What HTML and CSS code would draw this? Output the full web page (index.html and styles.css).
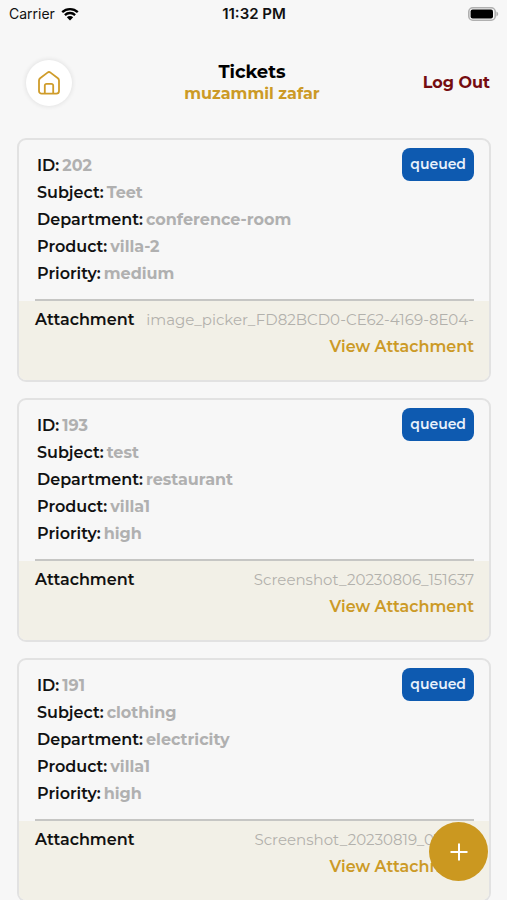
FILE: index.html
```html
<!DOCTYPE html>
<html lang="en">
<head>
<meta charset="utf-8">
<meta name="viewport" content="width=device-width, initial-scale=1">
<title>Tickets</title>
<link rel="stylesheet" href="styles.css">
</head>
<body>
<div class="app">
  <div class="status">
    <div class="status-left">
      <span>Carrier</span>
      <svg class="wifi" viewBox="0 0 18 14" aria-hidden="true">
        <path d="M1.2 5.2a11.2 11.2 0 0 1 15.6 0M3.9 8.1a7.3 7.3 0 0 1 10.2 0" fill="none" stroke="#000" stroke-width="2.3"/>
        <path d="M5.8 10.2a4.6 4.6 0 0 1 6.4 0L9 13.6z"/>
      </svg>
    </div>
    <span class="status-time">11:32 PM</span>
    <div class="status-right">
      <svg class="battery" viewBox="0 0 31 14" aria-hidden="true">
        <rect x="0.8" y="0.8" width="26.4" height="12.4" rx="4" fill="#f7f7f7" stroke="#b0b0b0" stroke-width="1.6"/>
        <rect x="2.6" y="2.4" width="22.4" height="9.2" rx="2"/>
        <path d="M28.4 4.6c2.4.8 2.4 4 0 4.8z" fill="#b0b0b0"/>
      </svg>
    </div>
  </div>

  <header class="header">
    <div class="header-side">
      <button class="home" type="button" aria-label="Home">
        <svg class="home-icon" viewBox="0 0 24 24" aria-hidden="true">
          <path d="M2 9.4c0-.9.4-1.6 1.100-2.200L10.500 1.600a2.500 2.500 0 0 1 3 0l7.400 5.600c.7.600 1.100 1.300 1.100 2.200V20a2.700 2.700 0 0 1-2.700 2.700H4.700A2.700 2.700 0 0 1 2 20z"/>
          <path d="M7.800 22.500v-8a1.700 1.700 0 0 1 1.700-1.700h5a1.700 1.700 0 0 1 1.700 1.700v8"/>
        </svg>
      </button>
    </div>
    <div class="heading">
      <h1 class="title">Tickets</h1>
      <p class="user">muzammil zafar</p>
    </div>
    <div class="header-side header-end">
      <button class="logout" type="button">Log Out</button>
    </div>
  </header>

  <main class="list">
    <article class="card">
      <div class="card-body">
        <dl class="fields">
          <div class="field"><dt>ID:</dt><dd>202</dd></div>
          <div class="field"><dt>Subject:</dt><dd>Teet</dd></div>
          <div class="field"><dt>Department:</dt><dd>conference-room</dd></div>
          <div class="field"><dt>Product:</dt><dd>villa-2</dd></div>
          <div class="field"><dt>Priority:</dt><dd>medium</dd></div>
        </dl>
        <span class="badge">queued</span>
      </div>
      <div class="attachment">
        <div class="attachment-row">
          <span class="attachment-label">Attachment</span>
          <span class="file">image_picker_FD82BCD0-CE62-4169-8E04-</span>
        </div>
        <a class="view" href="#">View Attachment</a>
      </div>
    </article>

    <article class="card">
      <div class="card-body">
        <dl class="fields">
          <div class="field"><dt>ID:</dt><dd>193</dd></div>
          <div class="field"><dt>Subject:</dt><dd>test</dd></div>
          <div class="field"><dt>Department:</dt><dd>restaurant</dd></div>
          <div class="field"><dt>Product:</dt><dd>villa1</dd></div>
          <div class="field"><dt>Priority:</dt><dd>high</dd></div>
        </dl>
        <span class="badge">queued</span>
      </div>
      <div class="attachment">
        <div class="attachment-row">
          <span class="attachment-label">Attachment</span>
          <span class="file">Screenshot_20230806_151637</span>
        </div>
        <a class="view" href="#">View Attachment</a>
      </div>
    </article>

    <article class="card">
      <div class="card-body">
        <dl class="fields">
          <div class="field"><dt>ID:</dt><dd>191</dd></div>
          <div class="field"><dt>Subject:</dt><dd>clothing</dd></div>
          <div class="field"><dt>Department:</dt><dd>electricity</dd></div>
          <div class="field"><dt>Product:</dt><dd>villa1</dd></div>
          <div class="field"><dt>Priority:</dt><dd>high</dd></div>
        </dl>
        <span class="badge">queued</span>
      </div>
      <div class="attachment">
        <div class="attachment-row">
          <span class="attachment-label">Attachment</span>
          <span class="file">Screenshot_20230819_013625</span>
        </div>
        <a class="view" href="#">View Attachment</a>
      </div>
    </article>
  </main>

  <button class="fab" type="button" aria-label="New ticket">
    <svg class="fab-icon" viewBox="0 0 18 18" aria-hidden="true"><path d="M9 0.500v17M0.500 9h17"/></svg>
  </button>
</div>
</body>
</html>
```
FILE: styles.css
```css
* {
  box-sizing: border-box;
}

body {
  margin: 0;
  background: #f7f7f7;
  color: #111;
  font-family: Montserrat, Inter, "Liberation Sans", sans-serif;
  font-size: 16px;
  font-weight: 600;
}

button {
  border: 0;
  padding: 0;
  background: none;
  font: inherit;
  cursor: pointer;
}

.app {
  display: flex;
  flex-direction: column;
  height: 100vh;
}

.status {
  display: grid;
  grid-template-columns: 1fr auto 1fr;
  align-items: center;
  height: 27px;
  padding: 0 8px 0 9px;
  font-family: Inter, sans-serif;
  font-size: 14px;
}

.status-left {
  display: flex;
  align-items: center;
  gap: 6px;
  font-weight: 400;
}

.status-time {
  font-size: 15px;
}

.status-right {
  display: flex;
  justify-content: flex-end;
}

.wifi {
  width: 18px;
  height: 14px;
}

.battery {
  width: 31px;
  height: 14px;
}

.header {
  display: grid;
  grid-template-columns: 1fr auto 1fr;
  align-items: center;
  height: 111px;
  padding: 0 17px 0 14px;
}

.header-side {
  display: flex;
  padding-left: 12px;
}

.header-end {
  justify-content: flex-end;
  padding: 0;
}

.home {
  display: grid;
  place-items: center;
  width: 46px;
  height: 46px;
  border-radius: 50%;
  background: #fff;
  box-shadow: 0 0 4px 1px rgba(0, 0, 0, 0.08);
}

.home-icon {
  width: 24px;
  height: 24px;
  fill: none;
  stroke: #cf9c2a;
  stroke-width: 1.8;
}

.heading {
  text-align: center;
}

.title,
.user {
  margin: 0;
  font-size: 16px;
  line-height: 21px;
  font-weight: 700;
}

.title {
  font-size: 18px;
  color: #000;
}

.user {
  color: #cc9a26;
}

.logout {
  color: #750c10;
  font-weight: 700;
}

.list {
  flex: 1;
  display: flex;
  flex-direction: column;
  gap: 16px;
  min-height: 0;
  padding: 0 16px 16px 17px;
  overflow-y: auto;
  scrollbar-width: none;
}

.card {
  flex: none;
  border: 2px solid #e2e2e2;
  border-radius: 9px;
  overflow: hidden;
}

.card-body {
  display: flex;
  justify-content: space-between;
  align-items: flex-start;
  margin: 0 15px 0 16px;
  padding: 8px 0 12px 2px;
  border-bottom: 2px solid #c6c6c4;
}

.fields {
  margin: 0;
  padding-top: 4px;
}

.field {
  display: flex;
  gap: 3px;
  line-height: 27px;
}

.field dd {
  margin: 0;
  color: #b0b0b0;
  font-weight: 700;
}

.badge {
  padding: 0 8px;
  border-radius: 8px;
  background: #0e5ab0;
  color: #e9f1fb;
  font-size: 14px;
  line-height: 33px;
}

.attachment {
  padding: 5px 15px 20px 16px;
  background: #f2f0e7;
  line-height: 27px;
}

.attachment-row {
  display: flex;
  justify-content: space-between;
  gap: 10px;
}

.file {
  overflow: hidden;
  white-space: nowrap;
  color: #b2b1ac;
  font-size: 15px;
  font-weight: 400;
}

.view {
  display: block;
  color: #cc9a26;
  text-align: right;
  text-decoration: none;
}

.fab {
  position: fixed;
  right: 19px;
  bottom: 19px;
  display: grid;
  place-items: center;
  width: 59px;
  height: 59px;
  border-radius: 50%;
  background: #cb9820;
}

.fab-icon {
  width: 18px;
  height: 18px;
  fill: none;
  stroke: #fff;
  stroke-width: 2;
}
```
